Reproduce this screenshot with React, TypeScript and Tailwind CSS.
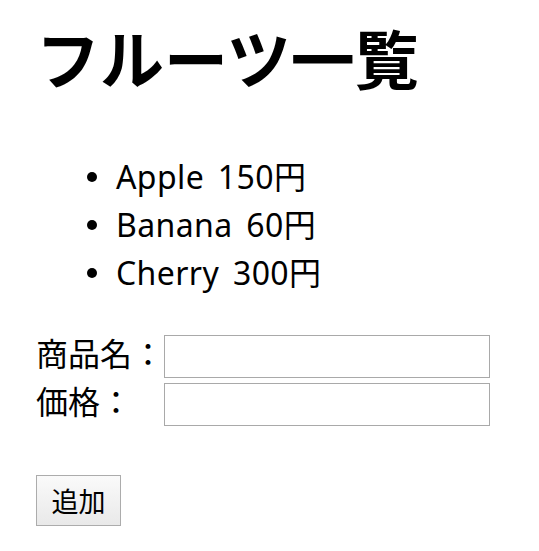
import React from "react";

const fruits = [
  { name: "Apple", price: 150 },
  { name: "Banana", price: 60 },
  { name: "Cherry", price: 300 },
];

export default function App() {
  return (
    <div className="min-h-[551px] w-full bg-white pl-[36px] pt-[24px] text-black">
      <h1 className="m-0 text-[64px] font-bold leading-[64px] [font-family:'Noto_Sans_CJK_JP',sans-serif]">
        フルーツ一覧
      </h1>
      <ul className="mt-[65px] list-none pl-[80px] text-[32px] leading-[48px] tracking-[0.4px] [word-spacing:5px] [font-family:'Noto_Sans','Noto_Sans_CJK_JP',sans-serif]">
        {fruits.map((f) => (
          <li key={f.name} className="relative">
            <span className="absolute left-[-29px] top-[19px] h-[10px] w-[10px] rounded-full bg-black" />
            {f.name} {f.price}円
          </li>
        ))}
      </ul>
      <div className="mt-[38px] flex flex-col gap-[5px] text-[32px] [font-family:'Noto_Sans_CJK_JP',sans-serif]">
        <div className="flex items-start">
          <span className="w-[128px] leading-[35px]">商品名：</span>
          <input
            type="text"
            className="h-[43px] w-[326px] border border-[#a9a9a9] bg-white outline-none"
          />
        </div>
        <div className="flex items-start">
          <span className="w-[128px] leading-[35px]">価格：</span>
          <input
            type="text"
            className="h-[43px] w-[326px] border border-[#a9a9a9] bg-white outline-none"
          />
        </div>
      </div>
      <button className="mt-[49px] flex h-[51px] w-[85px] items-center justify-center border border-[#acacac] bg-gradient-to-b from-[#fafafa] to-[#e9e9e9] text-[27px] leading-[27px] [font-family:'Noto_Sans_CJK_JP',sans-serif]">
        追加
      </button>
    </div>
  );
}
